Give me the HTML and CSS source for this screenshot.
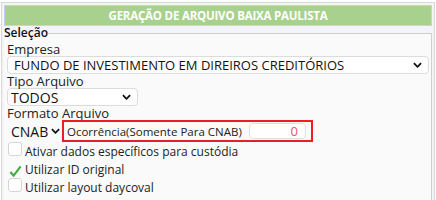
FILE: index.html
```html
<!DOCTYPE html>
<html lang="pt-BR">
<head>
  <meta charset="UTF-8">
  <title>Geração de Arquivo Baixa Paulista</title>
  <link rel="stylesheet" href="styles.css">
</head>
<body>

  <div class="panel">
    <div class="panel-title">GERAÇÃO DE ARQUIVO BAIXA PAULISTA</div>

    <fieldset class="selection">
      <legend>Seleção</legend>

      <label class="field-label" for="empresa">Empresa</label>
      <div class="select select-wide" id="empresa">
        <span>FUNDO DE INVESTIMENTO EM DIREIROS CREDITÓRIOS</span>
        <svg class="chevron" viewBox="0 0 10 6"><path d="M1 1l4 4 4-4"/></svg>
      </div>

      <label class="field-label" for="tipo">Tipo Arquivo</label>
      <div class="select select-small" id="tipo">
        <span>TODOS</span>
        <svg class="chevron" viewBox="0 0 10 6"><path d="M1 1l4 4 4-4"/></svg>
      </div>

      <label class="field-label" for="formato">Formato Arquivo</label>
      <div class="format-row">
        <div class="select select-bare" id="formato">
          <span>CNAB</span>
          <svg class="chevron" viewBox="0 0 10 6"><path d="M1 1l4 4 4-4"/></svg>
        </div>
        <div class="occurrence">
          <span class="occurrence-label">Ocorrência(Somente Para CNAB)</span>
          <div class="num-input">0</div>
        </div>
      </div>

      <div class="check-row">
        <span class="checkbox"></span>
        <span class="check-label">Ativar dados específicos para custódia</span>
      </div>
      <div class="check-row">
        <span class="checkbox checked">
          <svg viewBox="0 0 14 14"><path d="M1.5 7.5l3.5 4 7.5-10"/></svg>
        </span>
        <span class="check-label">Utilizar ID original</span>
      </div>
      <div class="check-row">
        <span class="checkbox"></span>
        <span class="check-label">Utilizar layout daycoval</span>
      </div>
    </fieldset>
  </div>

</body>
</html>
```

FILE: styles.css
```css
/* Geração de arquivo */
body {
  margin: 0;
  padding: 2px 1px 0 1px;
  box-sizing: border-box;
  height: 200px;
  overflow: hidden;
  background-color: #fff;
  font-family: "Open Sans", "Noto Sans", sans-serif;
  color: #222;
}

.panel {
  display: flex;
  flex-direction: column;
  box-sizing: border-box;
  height: 100%;
  border: 1px solid #d8d8d8;
  border-bottom: none;
  background-color: #f4f4f4;
  padding: 2px 2px 0 2px;
}

.panel-title {
  height: 19px;
  line-height: 19px;
  background-color: #a9d18e;
  border: 1px solid #c9cff0;
  color: #fff;
  font-size: 11.5px;
  font-weight: 700;
  text-align: center;
  letter-spacing: -0.2px;
}

.selection {
  flex: 1;
  min-width: 0;
  margin: 1px 0 0 0;
  padding: 3px 4px 0 3px;
  border: none;
  border-top: 1px solid #cfcfcf;
  border-right: 1px solid #cfcfcf;
  background-color: #fafafa;
}

.selection legend {
  padding: 0;
  margin-left: -3px;
  font-size: 12px;
  line-height: 12px;
  font-weight: 600;
  color: #111;
}

.field-label {
  display: block;
  font-size: 13px;
  line-height: 14px;
  color: #222;
}

.select {
  display: flex;
  align-items: center;
  justify-content: space-between;
  box-sizing: border-box;
  height: 18px;
  padding: 0 6px 0 6px;
  background-color: #fff;
  border: 1px solid #dcdcdc;
  border-radius: 4px;
  font-size: 13px;
  color: #111;
}

.select-wide {
  width: 422px;
}

.select-small {
  width: 131px;
  padding-left: 3px;
  font-size: 14px;
}

.select-bare {
  justify-content: flex-start;
  gap: 3px;
  width: 54px;
  height: 22px;
  padding: 0 0 0 3px;
  border-color: transparent;
  background: transparent;
  font-size: 14px;
}

.chevron {
  flex-shrink: 0;
  width: 9px;
  height: 6px;
  fill: none;
  stroke: #111;
  stroke-width: 2;
}

.format-row {
  display: flex;
  align-items: center;
  gap: 1px;
}

.occurrence {
  display: flex;
  align-items: center;
  justify-content: space-between;
  box-sizing: border-box;
  width: 251px;
  height: 22px;
  padding: 0 5px 0 3px;
  border: 2px solid #ee1c25;
  font-size: 11.5px;
  color: #222;
}

.occurrence-label {
  white-space: nowrap;
}

.num-input {
  flex-shrink: 0;
  box-sizing: border-box;
  width: 57px;
  height: 16px;
  line-height: 14px;
  padding-right: 7px;
  border: 1px solid #e0e0e0;
  border-radius: 4px;
  background-color: #fff;
  text-align: right;
  font-size: 13px;
  color: #f05454;
}

.check-row {
  display: flex;
  align-items: flex-start;
  gap: 3px;
  height: 18px;
  margin-left: 1px;
  font-size: 12px;
  color: #222;
}

.check-label {
  margin-top: 3px;
  line-height: 14px;
}

.checkbox {
  flex-shrink: 0;
  box-sizing: border-box;
  width: 14px;
  height: 14px;
  border: 1px solid #d6d6d6;
  border-radius: 3px;
  background-color: #fff;
}

.checkbox.checked {
  margin-top: 4px;
  border-color: transparent;
  background: transparent;
}

.checkbox svg {
  width: 13px;
  height: 13px;
  fill: none;
  stroke: #3cae3c;
  stroke-width: 2.2;
}
```
